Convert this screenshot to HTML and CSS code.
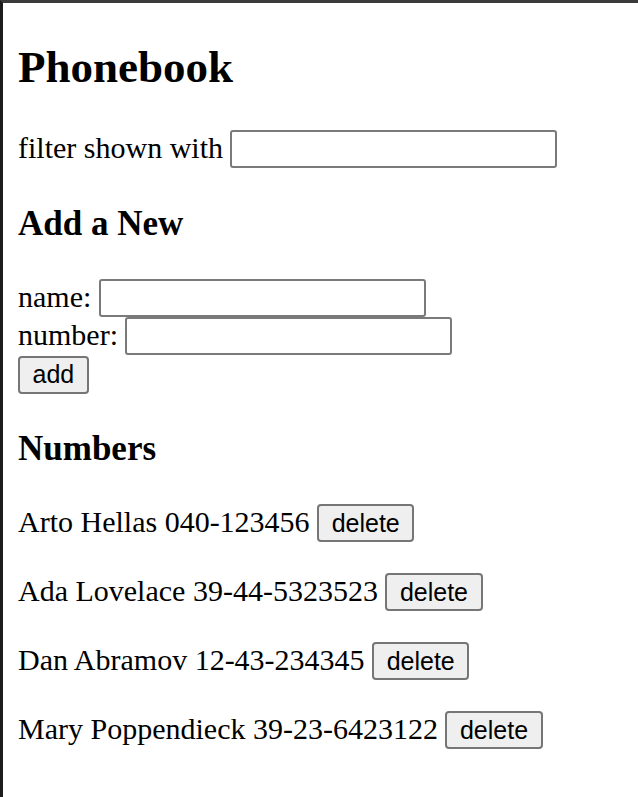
FILE: index.html
```html
<!DOCTYPE html>
<html>
<head>
<meta charset="utf-8">
<title>Phonebook</title>
<link rel="stylesheet" href="styles.css">
</head>
<body>
<div class="page">
  <h1 class="title">Phonebook</h1>
  <div class="row">filter shown with <input class="field" type="text"></div>
  <h3 class="subtitle">Add a New</h3>
  <form class="form">
    <div class="row">name: <input class="field" type="text"></div>
    <div class="row">number: <input class="field" type="text"></div>
    <div class="row"><button class="btn" type="button">add</button></div>
  </form>
  <h2 class="subtitle">Numbers</h2>
  <div class="list">
    <p class="entry">Arto Hellas 040-123456 <button class="btn" type="button">delete</button></p>
    <p class="entry">Ada Lovelace 39-44-5323523 <button class="btn" type="button">delete</button></p>
    <p class="entry">Dan Abramov 12-43-234345 <button class="btn" type="button">delete</button></p>
    <p class="entry">Mary Poppendieck 39-23-6423122 <button class="btn" type="button">delete</button></p>
  </div>
</div>
</body>
</html>
```

FILE: styles.css
```css
html, body {
  margin: 0;
  padding: 0;
  background: #ffffff;
}

.page {
  box-sizing: border-box;
  min-height: 100vh;
  border-top: 3px solid #3b3b3b;
  border-left: 3px solid #1c1c1c;
  padding: 0 15px;
  font-family: "Liberation Serif", "Times New Roman", serif;
  font-size: 30px;
  color: #000;
  overflow: hidden;
}

.title {
  font-size: 45px;
  font-weight: bold;
  line-height: 52px;
  margin: 38px 0 37px;
}

.subtitle {
  font-size: 35px;
  font-weight: bold;
  line-height: 40px;
  margin: 35px 0;
}

.form {
  margin: 0;
}

.row {
  height: 38.5px;
  line-height: 34.5px;
}

.field {
  box-sizing: border-box;
  width: 327px;
  height: 38px;
  margin: 0;
  padding: 2px 4px;
  border: 2px solid #7a7a7a;
  border-radius: 3px;
  background: #fff;
  font-family: "Liberation Sans", Arial, sans-serif;
  font-size: 25px;
  vertical-align: baseline;
}

.btn {
  box-sizing: border-box;
  height: 38px;
  margin: 0;
  padding: 0 12.5px;
  border: 2px solid #767676;
  border-radius: 4px;
  background: #efefef;
  color: #000;
  font-family: "Liberation Sans", Arial, sans-serif;
  font-size: 25px;
  vertical-align: baseline;
}

.entry {
  height: 39px;
  margin: 30px 0;
  line-height: 34.5px;
}
```
